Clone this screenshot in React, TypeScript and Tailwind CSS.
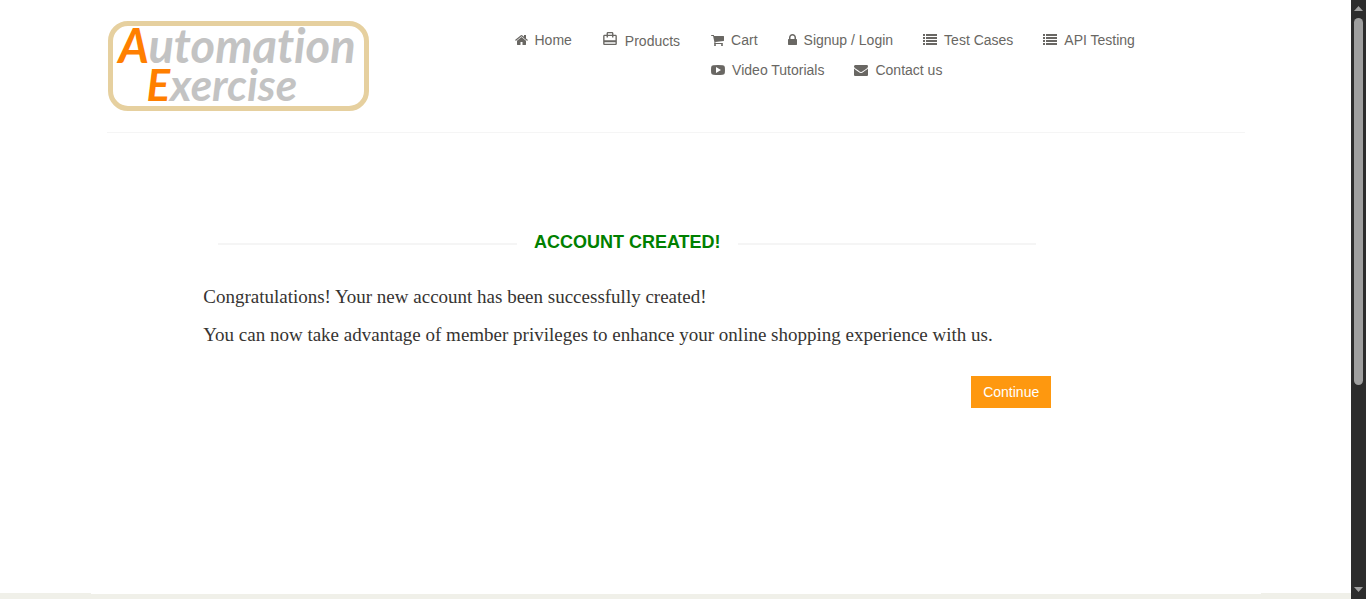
import type { ReactNode } from "react";

function Icon({ viewBox, className, children }: { viewBox: string; className: string; children: ReactNode }) {
  return (
    <svg viewBox={viewBox} className={className} fill="currentColor" aria-hidden="true">
      {children}
    </svg>
  );
}

const HomeIcon = () => (
  <Icon viewBox="64 0 1664 1792" className="h-[14px] w-[13px]">
    <path d="M1472 992v480q0 26-19 45t-45 19h-384v-384h-256v384h-384q-26 0-45-19t-19-45v-480q0-1 .5-3t.5-3l575-474 575 474q1 2 1 6zm223-69l-62 74q-8 9-21 11h-3q-13 0-21-7l-692-577-692 577q-12 8-24 7-13-2-21-11l-62-74q-8-10-7-23.500t11-21.500l719-599q32-26 76-26t76 26l244 204v-195q0-14 9-23t23-9h192q14 0 23 9t9 23v408l219 182q10 8 11 21.500t-7 23.500z" />
  </Icon>
);

const BagIcon = () => (
  <Icon viewBox="2 2 20 19" className="mb-[5px] h-[13px] w-[14px]">
    <path d="M20 6h-3V4c0-1.110-.89-2-2-2H9c-1.110 0-2 .89-2 2v2H4c-1.110 0-2 .89-2 2v11c0 1.110.89 2 2 2h16c1.110 0 2-.89 2-2V8c0-1.110-.89-2-2-2zM9 4h6v2H9V4zm11 15H4v-2h16v2zm0-5H4V8h3v2h2V8h6v2h2V8h3v6z" />
  </Icon>
);

const CartIcon = () => (
  <Icon viewBox="64 0 1664 1792" className="h-[14px] w-[13px]">
    <path d="M704 1536q0 52-38 90t-90 38-90-38-38-90 38-90 90-38 90 38 38 90zm896 0q0 52-38 90t-90 38-90-38-38-90 38-90 90-38 90 38 38 90zm128-1088v512q0 24-16.500 42.500t-40.500 21.500l-1044 122q13 60 13 70 0 16-24 64h920q26 0 45 19t19 45-19 45-45 19h-1024q-26 0-45-19t-19-45q0-11 8-31.500t16-36 21.500-40 15.500-29.500l-177-823h-204q-26 0-45-19t-19-45 19-45 45-19h256q16 0 28.500 6.500t19.500 15.500 13 24.500 8 26 5.500 29.500 4.500 26h1201q26 0 45 19t19 45z" />
  </Icon>
);

const LockIcon = () => (
  <Icon viewBox="320 0 1152 1792" className="h-[14px] w-[9px]">
    <path d="M640 768h512v-192q0-106-75-181t-181-75-181 75-75 181v192zm832 96v576q0 40-28 68t-68 28h-960q-40 0-68-28t-28-68v-576q0-40 28-68t68-28h32v-192q0-184 132-316t316-132 316 132 132 316v192h32q40 0 68 28t28 68z" />
  </Icon>
);

const ListIcon = () => (
  <Icon viewBox="0 0 14 14" className="size-[14px]">
    {[1, 4, 7, 10].map((y) => (
      <g key={y}>
        <rect x="0" y={y} width="2" height="2" />
        <rect x="3" y={y} width="11" height="2" />
      </g>
    ))}
  </Icon>
);

const VideoIcon = () => (
  <Icon viewBox="0 0 14 14" className="size-[14px]">
    <path
      fillRule="evenodd"
      d="M2.300 2.200Q7 1.800 11.700 2.200Q13.600 2.400 13.800 4Q14.150 7 13.800 10Q13.600 11.600 11.700 11.800Q7 12.200 2.300 11.800Q.4 11.600.2 10Q-.15 7 .2 4Q.4 2.400 2.300 2.200ZM5 4V10L10 7Z"
    />
  </Icon>
);

const MailIcon = () => (
  <Icon viewBox="0 0 1792 1792" className="size-[14px]">
    <path d="M1792 710v794q0 66-47 113t-113 47h-1472q-66 0-113-47t-47-113v-794q44 49 101 87 362 246 497 345 57 42 92.500 65.500t94.500 48 110 24.500h2q51 0 110-24.500t94.500-48 92.500-65.500q170-123 498-345 57-39 100-87zm0-294q0 79-49 151t-122 123q-376 261-468 325-10 7-42.500 31t-54 38.500-52 32.500-57.500 27-50 9h-2q-23 0-50-9t-57.500-27-52-32.500-54-38.500-42.500-31q-91-64-262-182.500t-205-142.500q-62-42-117-115.500t-55-136.500q0-78 41.500-130t118.500-52h1472q65 0 112.500 47t47.500 113z" />
  </Icon>
);

function NavLink({ icon, children }: { icon: ReactNode; children: ReactNode }) {
  return (
    <li>
      <a href="#" className="flex h-5 items-center gap-[7px] whitespace-nowrap">
        {icon}
        {children}
      </a>
    </li>
  );
}

function Logo() {
  return (
    <a
      href="#"
      aria-label="Automation Exercise"
      className="ml-px block h-[90px] w-[261px] shrink-0 rounded-[20px] border-5 border-[#e6d09f] px-[6px] font-['Lato','Liberation_Sans',sans-serif] text-[44px] leading-[39px] font-bold text-[#c3c3c3] italic [font-variant-ligatures:none]"
    >
      <span className="block text-[47px]">
        <span className="text-[#ff7f00]">A</span>utomation
      </span>
      <span className="block pl-[28px]">
        <span className="text-[#ff7f00]">E</span>xercise
      </span>
    </a>
  );
}

function Scrollbar() {
  return (
    <div className="flex w-[15px] shrink-0 flex-col items-center bg-[#2c2c2c] pt-[6px] pb-[7px]" aria-hidden="true">
      <svg viewBox="0 0 9 5" className="h-[5px] w-[9px]" fill="#9f9f9f">
        <path d="M4.500 0 9 5H0Z" />
      </svg>
      <div className="mt-[7px] h-[367px] w-[9px] rounded-full bg-[#9f9f9f]" />
      <svg viewBox="0 0 9 5" className="mt-auto h-[5px] w-[9px]" fill="#9f9f9f">
        <path d="M4.500 5 9 0H0Z" />
      </svg>
    </div>
  );
}

export default function App() {
  return (
    <div className="flex h-screen overflow-hidden bg-white font-['Liberation_Sans',Arial,sans-serif] text-sm text-[#696763]">
      <div className="flex min-w-0 flex-1 flex-col">
        <div className="mx-auto w-full max-w-[1170px] px-4">
          <header className="flex min-h-[133px] items-start border-b border-[#f5f5f5] pt-[21px]">
            <Logo />
            <nav className="ml-auto w-[730px] pt-[9px]">
              <ul className="flex items-start gap-[31px]">
                <NavLink icon={<HomeIcon />}>Home</NavLink>
                <li>
                  <a href="#" className="flex h-[22px] items-center gap-2">
                    <BagIcon />
                    Products
                  </a>
                </li>
                <li className="flex-1">
                  <ul className="flex flex-wrap gap-x-[30px] gap-y-[10px]">
                    <NavLink icon={<CartIcon />}>Cart</NavLink>
                    <NavLink icon={<LockIcon />}>Signup / Login</NavLink>
                    <NavLink icon={<ListIcon />}>Test Cases</NavLink>
                    <NavLink icon={<ListIcon />}>API Testing</NavLink>
                    <NavLink icon={<VideoIcon />}>Video Tutorials</NavLink>
                    <NavLink icon={<MailIcon />}>Contact us</NavLink>
                  </ul>
                </li>
              </ul>
            </nav>
          </header>
          <main className="mt-[98px] ml-[8.5%] max-w-[848px]">
            <h2 className="flex items-center gap-[17px] px-[15px] text-lg leading-[22px] font-bold text-[#008000]">
              <span className="mt-[3px] h-[2px] flex-1 bg-[#f5f5f5]" />
              ACCOUNT CREATED!
              <span className="mt-[3px] h-[2px] flex-1 bg-[#f5f5f5]" />
            </h2>
            <div className="mt-[30px] space-y-[10px] font-['Liberation_Serif',serif] text-[19px] leading-7 text-[#363432]">
              <p>Congratulations! Your new account has been successfully created!</p>
              <p>You can now take advantage of member privileges to enhance your online shopping experience with us.</p>
            </div>
            <div className="mt-[27px] flex justify-end">
              <a href="#" className="bg-[#fe980f] px-3 py-[6px] leading-5 text-white">
                Continue
              </a>
            </div>
          </main>
        </div>
        <footer className="mt-auto h-[6px] shrink-0 bg-[#f0f0e9]">
          <div className="mx-auto h-px max-w-[1170px] bg-white" />
        </footer>
      </div>
      <Scrollbar />
    </div>
  );
}
